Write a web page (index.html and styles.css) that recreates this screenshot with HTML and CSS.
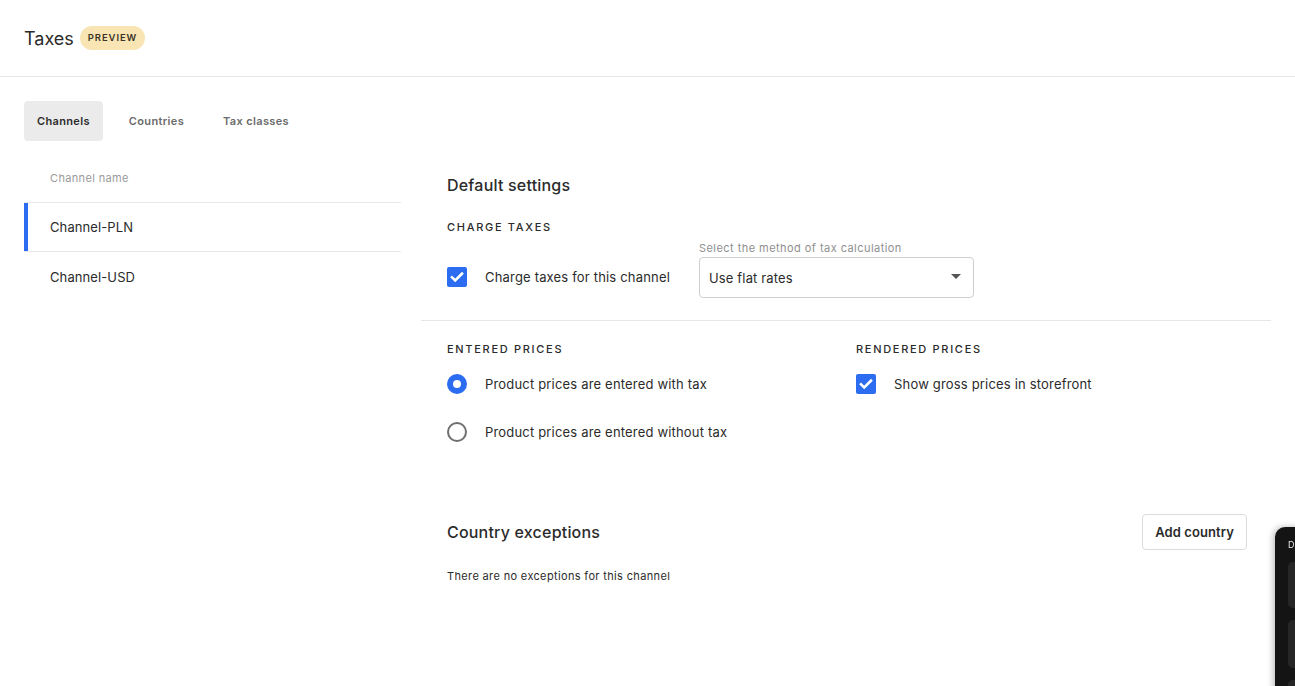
FILE: index.html
```html
<!DOCTYPE html>
<html lang="en">
<head>
<meta charset="utf-8">
<title>Taxes</title>
<link rel="stylesheet" href="styles.css">
</head>
<body>
<header class="topbar">
  <h1 class="page-title">Taxes</h1>
  <span class="badge">PREVIEW</span>
</header>
<main class="content">
  <nav class="tabs">
    <button class="tab tab-active">Channels</button>
    <button class="tab">Countries</button>
    <button class="tab">Tax classes</button>
  </nav>
  <div class="layout">
    <section class="channel-list">
      <div class="list-head">Channel name</div>
      <div class="list-row list-row-active">Channel-PLN</div>
      <div class="list-row">Channel-USD</div>
    </section>
    <section class="settings">
      <div class="block block-top">
        <h2 class="block-title">Default settings</h2>
        <div class="caption">CHARGE TAXES</div>
        <div class="charge-row">
          <label class="check-item">
            <span class="checkbox"><svg viewBox="0 0 20 20" width="20" height="20"><path d="M5 10.3l3.2 3.2L15 6.7" fill="none" stroke="#fff" stroke-width="2.6" stroke-linecap="square"/></svg></span>
            <span class="check-label">Charge taxes for this channel</span>
          </label>
          <div class="field">
            <div class="field-label">Select the method of tax calculation</div>
            <div class="select">
              <span>Use flat rates</span>
              <svg class="caret" viewBox="0 0 10 5" width="10" height="5"><path d="M0 0h10L5 5z" fill="#555"/></svg>
            </div>
          </div>
        </div>
      </div>
      <div class="block block-prices">
        <div class="price-col price-col-first">
          <div class="caption">ENTERED PRICES</div>
          <label class="option-row">
            <span class="radio radio-on"></span>
            <span class="check-label">Product prices are entered with tax</span>
          </label>
          <label class="option-row">
            <span class="radio"></span>
            <span class="check-label">Product prices are entered without tax</span>
          </label>
        </div>
        <div class="price-col">
          <div class="caption">RENDERED PRICES</div>
          <label class="option-row">
            <span class="checkbox"><svg viewBox="0 0 20 20" width="20" height="20"><path d="M5 10.3l3.2 3.2L15 6.7" fill="none" stroke="#fff" stroke-width="2.6" stroke-linecap="square"/></svg></span>
            <span class="check-label">Show gross prices in storefront</span>
          </label>
        </div>
      </div>
      <div class="block block-exceptions">
        <div class="exceptions-head">
          <h2 class="block-title">Country exceptions</h2>
          <button class="btn-outline">Add country</button>
        </div>
        <p class="empty-note">There are no exceptions for this channel</p>
      </div>
    </section>
  </div>
</main>
<aside class="dev-panel">
  <div class="dev-title">D</div>
  <div class="dev-box"></div>
  <div class="dev-box"></div>
  <div class="dev-box"></div>
</aside>
</body>
</html>
```

FILE: styles.css
```css
* { box-sizing: border-box; }
html, body { margin: 0; padding: 0; }
body {
  font-family: Inter, "Noto Sans", "Liberation Sans", sans-serif;
  color: #2b2b2b;
  background: #fff;
  width: 1295px;
  height: 686px;
  overflow: hidden;
}
.topbar {
  height: 77px;
  border-bottom: 1px solid #e6e6e6;
  display: flex;
  align-items: center;
  padding: 0 24px;
  gap: 6px;
}
.page-title {
  margin: 0;
  font-size: 18px;
  font-weight: 400;
  color: #2b2b2b;
  letter-spacing: 0;
}
.badge {
  background: #f8e5b3;
  color: #3a3326;
  font-size: 9.5px;
  font-weight: 600;
  letter-spacing: 0.9px;
  height: 24px;
  padding: 0 8px;
  border-radius: 12px;
  display: inline-flex;
  align-items: center;
  margin-top: -1px;
}
.content { padding: 24px 0 0 24px; }
.tabs { display: flex; gap: 13px; height: 40px; }
.tab {
  border: 0;
  background: transparent;
  font-family: inherit;
  font-size: 11px;
  font-weight: 600;
  color: #6b6b6b;
  padding: 0 13px;
  height: 40px;
  border-radius: 4px;
  letter-spacing: 0.35px;
}
.tab-active { background: #ebebeb; color: #2b2b2b; }
.layout { display: flex; gap: 20px; margin-top: 13px; }
.channel-list { width: 377px; flex: none; }
.list-head {
  height: 49px;
  display: flex;
  align-items: center;
  padding-left: 26px;
  font-size: 11px;
  color: #9a9a9a;
  letter-spacing: 0.35px;
  border-bottom: 1px solid #e8e8e8;
}
.list-row {
  height: 49px;
  display: flex;
  align-items: center;
  padding-left: 26px;
  font-size: 13px;
  color: #2b2b2b;
  border-bottom: 1px solid #e8e8e8;
  letter-spacing: 0.1px;
}
.list-row:last-child { border-bottom: 0; }
.list-row-active { box-shadow: inset 4px 0 0 #2c6cf0; }
.settings { flex: 1; min-width: 0; margin-right: 24px; }
.block { padding: 0 26px; }
.block-top { padding-top: 19px; padding-bottom: 22px; border-bottom: 1px solid #e6e6e6; }
.block-title {
  margin: 0;
  font-size: 16px;
  line-height: 24px;
  font-weight: 500;
  color: #2b2b2b;
  letter-spacing: 0.2px;
}
.caption {
  font-size: 11px;
  line-height: 16px;
  font-weight: 500;
  letter-spacing: 1.7px;
  color: #2b2b2b;
}
.block-top .caption { margin-top: 22px; }
.charge-row { display: flex; align-items: flex-end; margin-top: 6px; }
.check-item {
  display: flex;
  align-items: center;
  height: 40px;
  padding-bottom: 2px;
  width: 252px;
}
.checkbox {
  width: 20px;
  height: 20px;
  border-radius: 2px;
  background: #2c6cf0;
  display: inline-block;
  flex: none;
}
.checkbox svg { display: block; }
.check-label {
  margin-left: 18px;
  font-size: 13px;
  color: #2b2b2b;
  letter-spacing: 0.18px;
}
.field { width: 275px; }
.field-label {
  font-size: 11px;
  line-height: 14px;
  color: #8f8f8f;
  letter-spacing: 0.45px;
  margin-bottom: 2px;
}
.select {
  height: 41px;
  border: 1px solid #cfcfcf;
  border-radius: 4px;
  display: flex;
  align-items: center;
  justify-content: space-between;
  padding: 0 12px 0 9px;
  font-size: 13px;
  letter-spacing: 0.15px;
}
.caret { display: block; margin-top: -3px; }
.block-prices { display: flex; padding-top: 20px; }
.price-col-first { width: 409px; flex: none; }
.option-row {
  display: flex;
  align-items: center;
  height: 48px;
}
.price-col .caption { margin-bottom: 3px; }
.radio {
  width: 20px;
  height: 20px;
  border-radius: 50%;
  border: 2px solid #6f6f6f;
  flex: none;
  display: inline-block;
}
.radio-on { border: 6px solid #2c6cf0; }
.block-exceptions { padding-top: 58px; }
.exceptions-head {
  display: flex;
  align-items: center;
  justify-content: space-between;
  margin-right: -2px;
}
.btn-outline {
  font-family: inherit;
  height: 36px;
  padding: 0 12px;
  background: #fff;
  border: 1px solid #dcdcdc;
  border-radius: 4px;
  font-size: 13px;
  font-weight: 600;
  color: #2b2b2b;
  letter-spacing: 0.1px;
}
.empty-note {
  margin: 19px 0 0;
  font-size: 11px;
  color: #2b2b2b;
  letter-spacing: 0.35px;
}
.dev-panel {
  position: fixed;
  left: 1275px;
  top: 527px;
  width: 240px;
  height: 200px;
  background: #141414;
  border-radius: 10px 0 0 0;
  box-shadow: -2px 0 6px rgba(0,0,0,0.25);
  padding: 12px 0 0 13px;
}
.dev-title { color: #e6e6e6; font-size: 9px; line-height: 12px; }
.dev-box {
  width: 200px;
  height: 46px;
  background: #262626;
  border-radius: 5px;
  margin-top: 11px;
}
.dev-box + .dev-box { height: 48px; margin-top: 12px; }
```
